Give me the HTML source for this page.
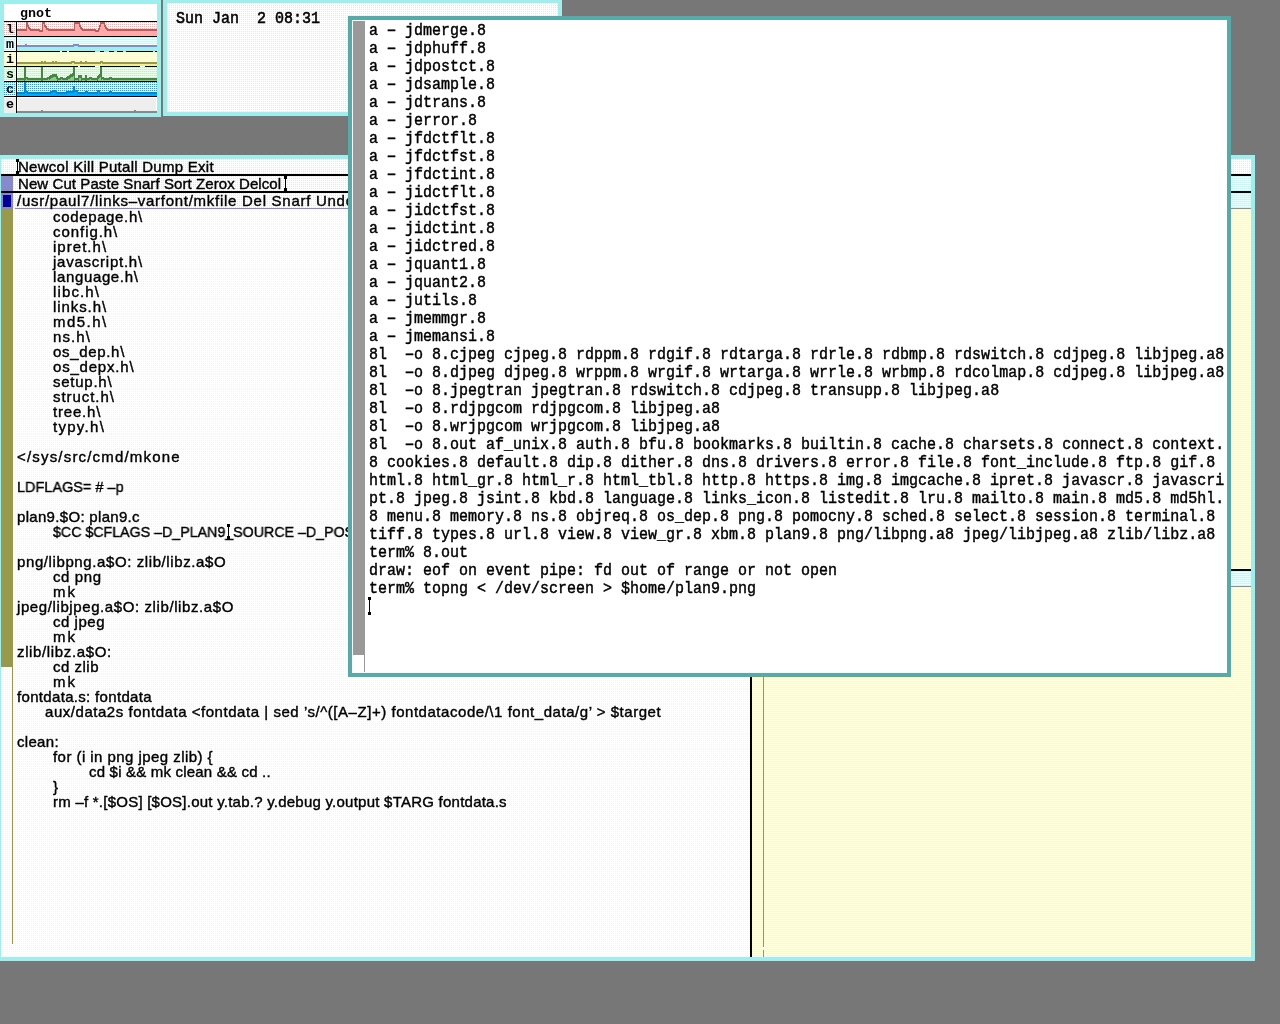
<!DOCTYPE html>
<html><head><meta charset="utf-8"><title>plan9</title>
<style>
html,body{margin:0;padding:0}
body{width:1280px;height:1024px;overflow:hidden;position:relative;background:#777777}
div,svg,span.a{position:absolute}
.c{background-color:#fff;background-image:conic-gradient(from 0deg at 50% 50%,transparent 0 75%,#AAFFFF 75%);background-size:2px 2px}
.y{background-color:#fff;background-image:conic-gradient(from 0deg at 50% 50%,transparent 0 75%,#FFFFAA 75%);background-size:2px 2px}
.r{background-color:#fff;background-image:conic-gradient(from 0deg at 50% 50%,transparent 0 75%,#FFAAAA 75%);background-size:2px 2px}
.g{background-color:#fff;background-image:conic-gradient(from 0deg at 50% 50%,transparent 0 75%,#AAFFAA 75%);background-size:2px 2px}
.b{background-color:#fff;background-image:conic-gradient(from 0deg at 50% 50%,transparent 0 75%,#00AAFF 75%);background-size:2px 2px}
.t,.m,.s{will-change:transform}
.t{font-family:"Liberation Sans",sans-serif;font-size:15px;line-height:15px;height:15px;white-space:pre;color:#000;overflow:visible;-webkit-text-stroke:0.4px #000}
.m{font-family:"Liberation Mono",monospace;font-size:15px;line-height:18.667px;height:18.667px;white-space:pre;color:#000;transform:scaleY(1.125);transform-origin:0 0;-webkit-text-stroke:0.4px #000}
.s{font-family:"Liberation Mono",monospace;font-size:13.333px;line-height:15px;height:15px;white-space:pre;color:#000;font-weight:bold}
.h{position:relative;top:0.9px}
b{font-weight:inherit}
.k{background:#000}
</style></head><body>

<div style="left:0px;top:0px;width:161px;height:117px;background:#9EEEEE;"></div>
<div style="left:4px;top:4px;width:153px;height:109px;background:#fff;"></div>
<div class="s" style="left:20px;top:6px">gnot</div>
<div class="r" style="left:4px;top:22px;width:153px;height:14px;background-position:0px 0px;"></div>
<div class="c" style="left:4px;top:37px;width:153px;height:14px;background-position:0px 0px;"></div>
<div class="y" style="left:4px;top:52px;width:153px;height:14px;background-position:0px 0px;"></div>
<div class="g" style="left:4px;top:67px;width:153px;height:14px;background-position:0px 0px;"></div>
<div class="b" style="left:4px;top:82px;width:153px;height:14px;background-position:0px 0px;"></div>
<div style="left:4px;top:97px;width:153px;height:16px;background:#EEEEEE;"></div>
<div style="left:4px;top:97px;width:153px;height:1px;background:#fff;"></div>
<div style="left:156px;top:97px;width:1px;height:16px;background:#fff;"></div>
<div style="left:17px;top:97px;width:1px;height:16px;background:#fff;"></div>
<svg id="graph" style="left:17px;top:22px" width="140" height="91" viewBox="17 22 140 91" shape-rendering="crispEdges">
<rect x="17" y="31" width="10" height="5" fill="#FFAAAA"/>
<rect x="27" y="27" width="1" height="9" fill="#FFAAAA"/>
<rect x="28" y="29" width="1" height="7" fill="#FFAAAA"/>
<rect x="29" y="30" width="1" height="6" fill="#FFAAAA"/>
<rect x="30" y="31" width="9" height="5" fill="#FFAAAA"/>
<rect x="39" y="32" width="4" height="4" fill="#FFAAAA"/>
<rect x="43" y="24" width="1" height="12" fill="#FFAAAA"/>
<rect x="44" y="27" width="1" height="9" fill="#FFAAAA"/>
<rect x="45" y="28" width="1" height="8" fill="#FFAAAA"/>
<rect x="46" y="30" width="2" height="6" fill="#FFAAAA"/>
<rect x="48" y="31" width="27" height="5" fill="#FFAAAA"/>
<rect x="75" y="24" width="4" height="12" fill="#FFAAAA"/>
<rect x="79" y="27" width="1" height="9" fill="#FFAAAA"/>
<rect x="80" y="29" width="1" height="7" fill="#FFAAAA"/>
<rect x="81" y="30" width="1" height="6" fill="#FFAAAA"/>
<rect x="82" y="31" width="13" height="5" fill="#FFAAAA"/>
<rect x="95" y="32" width="4" height="4" fill="#FFAAAA"/>
<rect x="99" y="30" width="1" height="6" fill="#FFAAAA"/>
<rect x="100" y="27" width="1" height="9" fill="#FFAAAA"/>
<rect x="101" y="24" width="3" height="12" fill="#FFAAAA"/>
<rect x="104" y="27" width="1" height="9" fill="#FFAAAA"/>
<rect x="105" y="29" width="1" height="7" fill="#FFAAAA"/>
<rect x="106" y="30" width="1" height="6" fill="#FFAAAA"/>
<rect x="107" y="31" width="50" height="5" fill="#FFAAAA"/>
<rect x="17" y="29" width="9" height="2" fill="#BB5D5D"/>
<rect x="26" y="22" width="1" height="9" fill="#BB5D5D"/>
<rect x="27" y="22" width="1" height="5" fill="#BB5D5D"/>
<rect x="28" y="25" width="1" height="4" fill="#BB5D5D"/>
<rect x="29" y="27" width="1" height="3" fill="#BB5D5D"/>
<rect x="30" y="28" width="1" height="3" fill="#BB5D5D"/>
<rect x="31" y="29" width="8" height="2" fill="#BB5D5D"/>
<rect x="39" y="29" width="1" height="3" fill="#BB5D5D"/>
<rect x="40" y="30" width="2" height="2" fill="#BB5D5D"/>
<rect x="42" y="22" width="1" height="10" fill="#BB5D5D"/>
<rect x="43" y="22" width="1" height="2" fill="#BB5D5D"/>
<rect x="44" y="22" width="1" height="5" fill="#BB5D5D"/>
<rect x="45" y="25" width="1" height="3" fill="#BB5D5D"/>
<rect x="46" y="26" width="1" height="4" fill="#BB5D5D"/>
<rect x="47" y="28" width="1" height="2" fill="#BB5D5D"/>
<rect x="48" y="28" width="1" height="3" fill="#BB5D5D"/>
<rect x="49" y="29" width="25" height="2" fill="#BB5D5D"/>
<rect x="74" y="22" width="1" height="9" fill="#BB5D5D"/>
<rect x="75" y="22" width="4" height="2" fill="#BB5D5D"/>
<rect x="79" y="22" width="1" height="5" fill="#BB5D5D"/>
<rect x="80" y="25" width="1" height="4" fill="#BB5D5D"/>
<rect x="81" y="27" width="1" height="3" fill="#BB5D5D"/>
<rect x="82" y="28" width="1" height="3" fill="#BB5D5D"/>
<rect x="83" y="29" width="12" height="2" fill="#BB5D5D"/>
<rect x="95" y="29" width="1" height="3" fill="#BB5D5D"/>
<rect x="96" y="30" width="2" height="2" fill="#BB5D5D"/>
<rect x="98" y="28" width="1" height="4" fill="#BB5D5D"/>
<rect x="99" y="25" width="1" height="5" fill="#BB5D5D"/>
<rect x="100" y="22" width="1" height="5" fill="#BB5D5D"/>
<rect x="101" y="22" width="3" height="2" fill="#BB5D5D"/>
<rect x="104" y="22" width="1" height="5" fill="#BB5D5D"/>
<rect x="105" y="25" width="1" height="4" fill="#BB5D5D"/>
<rect x="106" y="27" width="1" height="3" fill="#BB5D5D"/>
<rect x="107" y="28" width="1" height="3" fill="#BB5D5D"/>
<rect x="108" y="29" width="49" height="2" fill="#BB5D5D"/>
<rect x="17" y="47" width="57" height="4" fill="#9EEEEE"/>
<rect x="74" y="46" width="4" height="5" fill="#9EEEEE"/>
<rect x="78" y="47" width="79" height="4" fill="#9EEEEE"/>
<rect x="17" y="45" width="8" height="2" fill="#8888CC"/>
<rect x="25" y="44" width="2" height="3" fill="#8888CC"/>
<rect x="27" y="45" width="46" height="2" fill="#8888CC"/>
<rect x="73" y="44" width="1" height="3" fill="#8888CC"/>
<rect x="74" y="44" width="4" height="2" fill="#8888CC"/>
<rect x="78" y="44" width="1" height="3" fill="#8888CC"/>
<rect x="79" y="45" width="78" height="2" fill="#8888CC"/>
<rect x="17" y="64" width="55" height="2" fill="#EEEE9E"/>
<rect x="72" y="63" width="2" height="3" fill="#EEEE9E"/>
<rect x="74" y="64" width="27" height="2" fill="#EEEE9E"/>
<rect x="101" y="63" width="1" height="3" fill="#EEEE9E"/>
<rect x="102" y="64" width="55" height="2" fill="#EEEE9E"/>
<rect x="17" y="62" width="24" height="2" fill="#99994C"/>
<rect x="41" y="61" width="2" height="3" fill="#99994C"/>
<rect x="43" y="62" width="1" height="2" fill="#99994C"/>
<rect x="44" y="61" width="2" height="3" fill="#99994C"/>
<rect x="46" y="62" width="6" height="2" fill="#99994C"/>
<rect x="52" y="61" width="2" height="3" fill="#99994C"/>
<rect x="54" y="62" width="1" height="2" fill="#99994C"/>
<rect x="55" y="61" width="2" height="3" fill="#99994C"/>
<rect x="57" y="62" width="14" height="2" fill="#99994C"/>
<rect x="71" y="61" width="1" height="3" fill="#99994C"/>
<rect x="72" y="61" width="2" height="2" fill="#99994C"/>
<rect x="74" y="61" width="1" height="3" fill="#99994C"/>
<rect x="75" y="62" width="5" height="2" fill="#99994C"/>
<rect x="80" y="61" width="2" height="3" fill="#99994C"/>
<rect x="82" y="62" width="3" height="2" fill="#99994C"/>
<rect x="85" y="61" width="2" height="3" fill="#99994C"/>
<rect x="87" y="62" width="13" height="2" fill="#99994C"/>
<rect x="100" y="61" width="1" height="3" fill="#99994C"/>
<rect x="101" y="61" width="1" height="2" fill="#99994C"/>
<rect x="102" y="61" width="1" height="3" fill="#99994C"/>
<rect x="103" y="62" width="54" height="2" fill="#99994C"/>
<rect x="17" y="80" width="7" height="1" fill="#88CC88"/>
<rect x="25" y="80" width="1" height="1" fill="#88CC88"/>
<rect x="26" y="79" width="1" height="2" fill="#88CC88"/>
<rect x="27" y="80" width="14" height="1" fill="#88CC88"/>
<rect x="43" y="80" width="5" height="1" fill="#88CC88"/>
<rect x="48" y="79" width="1" height="2" fill="#88CC88"/>
<rect x="49" y="80" width="1" height="1" fill="#88CC88"/>
<rect x="50" y="79" width="1" height="2" fill="#88CC88"/>
<rect x="51" y="78" width="2" height="3" fill="#88CC88"/>
<rect x="53" y="77" width="3" height="4" fill="#88CC88"/>
<rect x="56" y="79" width="1" height="2" fill="#88CC88"/>
<rect x="58" y="80" width="3" height="1" fill="#88CC88"/>
<rect x="61" y="79" width="1" height="2" fill="#88CC88"/>
<rect x="62" y="80" width="6" height="1" fill="#88CC88"/>
<rect x="68" y="79" width="2" height="2" fill="#88CC88"/>
<rect x="70" y="78" width="1" height="3" fill="#88CC88"/>
<rect x="71" y="77" width="2" height="4" fill="#88CC88"/>
<rect x="73" y="76" width="1" height="5" fill="#88CC88"/>
<rect x="75" y="80" width="3" height="1" fill="#88CC88"/>
<rect x="79" y="78" width="2" height="3" fill="#88CC88"/>
<rect x="82" y="80" width="3" height="1" fill="#88CC88"/>
<rect x="87" y="80" width="3" height="1" fill="#88CC88"/>
<rect x="90" y="79" width="1" height="2" fill="#88CC88"/>
<rect x="91" y="80" width="6" height="1" fill="#88CC88"/>
<rect x="98" y="79" width="1" height="2" fill="#88CC88"/>
<rect x="99" y="78" width="1" height="3" fill="#88CC88"/>
<rect x="100" y="77" width="1" height="4" fill="#88CC88"/>
<rect x="101" y="80" width="1" height="1" fill="#88CC88"/>
<rect x="102" y="79" width="1" height="2" fill="#88CC88"/>
<rect x="103" y="80" width="7" height="1" fill="#88CC88"/>
<rect x="110" y="79" width="1" height="2" fill="#88CC88"/>
<rect x="111" y="80" width="46" height="1" fill="#88CC88"/>
<rect x="17" y="78" width="7" height="2" fill="#448844"/>
<rect x="24" y="67" width="1" height="14" fill="#448844"/>
<rect x="25" y="67" width="1" height="13" fill="#448844"/>
<rect x="26" y="77" width="1" height="2" fill="#448844"/>
<rect x="27" y="77" width="1" height="3" fill="#448844"/>
<rect x="28" y="78" width="13" height="2" fill="#448844"/>
<rect x="41" y="67" width="2" height="14" fill="#448844"/>
<rect x="43" y="78" width="4" height="2" fill="#448844"/>
<rect x="47" y="77" width="1" height="3" fill="#448844"/>
<rect x="48" y="77" width="1" height="2" fill="#448844"/>
<rect x="49" y="76" width="1" height="4" fill="#448844"/>
<rect x="50" y="75" width="1" height="4" fill="#448844"/>
<rect x="51" y="75" width="1" height="3" fill="#448844"/>
<rect x="52" y="74" width="1" height="4" fill="#448844"/>
<rect x="53" y="74" width="3" height="3" fill="#448844"/>
<rect x="56" y="74" width="1" height="5" fill="#448844"/>
<rect x="57" y="76" width="1" height="5" fill="#448844"/>
<rect x="58" y="78" width="2" height="2" fill="#448844"/>
<rect x="60" y="77" width="1" height="3" fill="#448844"/>
<rect x="61" y="77" width="1" height="2" fill="#448844"/>
<rect x="62" y="77" width="1" height="3" fill="#448844"/>
<rect x="63" y="78" width="3" height="2" fill="#448844"/>
<rect x="66" y="77" width="1" height="3" fill="#448844"/>
<rect x="67" y="76" width="1" height="4" fill="#448844"/>
<rect x="68" y="76" width="1" height="3" fill="#448844"/>
<rect x="69" y="75" width="1" height="4" fill="#448844"/>
<rect x="70" y="74" width="1" height="4" fill="#448844"/>
<rect x="71" y="74" width="1" height="3" fill="#448844"/>
<rect x="72" y="73" width="1" height="4" fill="#448844"/>
<rect x="73" y="67" width="1" height="9" fill="#448844"/>
<rect x="74" y="67" width="1" height="14" fill="#448844"/>
<rect x="75" y="78" width="3" height="2" fill="#448844"/>
<rect x="78" y="75" width="1" height="6" fill="#448844"/>
<rect x="79" y="75" width="2" height="3" fill="#448844"/>
<rect x="81" y="75" width="1" height="6" fill="#448844"/>
<rect x="82" y="78" width="3" height="2" fill="#448844"/>
<rect x="85" y="75" width="2" height="6" fill="#448844"/>
<rect x="87" y="78" width="2" height="2" fill="#448844"/>
<rect x="89" y="77" width="1" height="3" fill="#448844"/>
<rect x="90" y="77" width="1" height="2" fill="#448844"/>
<rect x="91" y="77" width="1" height="3" fill="#448844"/>
<rect x="92" y="78" width="5" height="2" fill="#448844"/>
<rect x="97" y="76" width="1" height="5" fill="#448844"/>
<rect x="98" y="75" width="1" height="4" fill="#448844"/>
<rect x="99" y="74" width="1" height="4" fill="#448844"/>
<rect x="100" y="67" width="1" height="10" fill="#448844"/>
<rect x="101" y="67" width="1" height="13" fill="#448844"/>
<rect x="102" y="77" width="1" height="2" fill="#448844"/>
<rect x="103" y="77" width="1" height="3" fill="#448844"/>
<rect x="104" y="78" width="5" height="2" fill="#448844"/>
<rect x="109" y="77" width="1" height="3" fill="#448844"/>
<rect x="110" y="77" width="1" height="2" fill="#448844"/>
<rect x="111" y="77" width="1" height="3" fill="#448844"/>
<rect x="112" y="78" width="45" height="2" fill="#448844"/>
<rect x="17" y="94" width="8" height="2" fill="#00AAFF"/>
<rect x="25" y="93" width="2" height="3" fill="#00AAFF"/>
<rect x="27" y="94" width="24" height="2" fill="#00AAFF"/>
<rect x="51" y="93" width="2" height="3" fill="#00AAFF"/>
<rect x="53" y="92" width="2" height="4" fill="#00AAFF"/>
<rect x="55" y="93" width="1" height="3" fill="#00AAFF"/>
<rect x="56" y="94" width="11" height="2" fill="#00AAFF"/>
<rect x="67" y="93" width="7" height="3" fill="#00AAFF"/>
<rect x="74" y="92" width="3" height="4" fill="#00AAFF"/>
<rect x="77" y="94" width="9" height="2" fill="#00AAFF"/>
<rect x="86" y="93" width="1" height="3" fill="#00AAFF"/>
<rect x="87" y="94" width="11" height="2" fill="#00AAFF"/>
<rect x="98" y="92" width="1" height="4" fill="#00AAFF"/>
<rect x="99" y="94" width="11" height="2" fill="#00AAFF"/>
<rect x="110" y="93" width="1" height="3" fill="#00AAFF"/>
<rect x="111" y="94" width="46" height="2" fill="#00AAFF"/>
<rect x="17" y="92" width="7" height="2" fill="#0088CC"/>
<rect x="24" y="82" width="1" height="12" fill="#0088CC"/>
<rect x="25" y="82" width="1" height="11" fill="#0088CC"/>
<rect x="26" y="91" width="1" height="2" fill="#0088CC"/>
<rect x="27" y="91" width="1" height="3" fill="#0088CC"/>
<rect x="28" y="92" width="22" height="2" fill="#0088CC"/>
<rect x="50" y="91" width="1" height="3" fill="#0088CC"/>
<rect x="51" y="91" width="1" height="2" fill="#0088CC"/>
<rect x="52" y="90" width="1" height="3" fill="#0088CC"/>
<rect x="53" y="90" width="2" height="2" fill="#0088CC"/>
<rect x="55" y="90" width="1" height="3" fill="#0088CC"/>
<rect x="56" y="91" width="1" height="3" fill="#0088CC"/>
<rect x="57" y="92" width="9" height="2" fill="#0088CC"/>
<rect x="66" y="91" width="1" height="3" fill="#0088CC"/>
<rect x="67" y="91" width="6" height="2" fill="#0088CC"/>
<rect x="73" y="86" width="1" height="7" fill="#0088CC"/>
<rect x="74" y="86" width="1" height="6" fill="#0088CC"/>
<rect x="75" y="90" width="2" height="2" fill="#0088CC"/>
<rect x="77" y="90" width="1" height="4" fill="#0088CC"/>
<rect x="78" y="92" width="7" height="2" fill="#0088CC"/>
<rect x="85" y="91" width="1" height="3" fill="#0088CC"/>
<rect x="86" y="91" width="1" height="2" fill="#0088CC"/>
<rect x="87" y="91" width="1" height="3" fill="#0088CC"/>
<rect x="88" y="92" width="9" height="2" fill="#0088CC"/>
<rect x="97" y="90" width="1" height="4" fill="#0088CC"/>
<rect x="98" y="90" width="1" height="2" fill="#0088CC"/>
<rect x="99" y="90" width="1" height="4" fill="#0088CC"/>
<rect x="100" y="92" width="9" height="2" fill="#0088CC"/>
<rect x="109" y="91" width="1" height="3" fill="#0088CC"/>
<rect x="110" y="91" width="1" height="2" fill="#0088CC"/>
<rect x="111" y="91" width="1" height="3" fill="#0088CC"/>
<rect x="112" y="92" width="45" height="2" fill="#0088CC"/>
<rect x="17" y="111" width="24" height="2" fill="#888888"/>
<rect x="41" y="110" width="2" height="3" fill="#888888"/>
<rect x="43" y="111" width="91" height="2" fill="#888888"/>
<rect x="134" y="110" width="2" height="3" fill="#888888"/>
<rect x="136" y="111" width="21" height="2" fill="#888888"/>
</svg>
<div style="left:4px;top:21px;width:153px;height:1px;background:#000;"></div>
<div style="left:4px;top:36px;width:153px;height:1px;background:#000;"></div>
<div style="left:4px;top:51px;width:153px;height:1px;background:#000;"></div>
<div style="left:4px;top:66px;width:153px;height:1px;background:#000;"></div>
<div style="left:4px;top:81px;width:153px;height:1px;background:#000;"></div>
<div style="left:4px;top:96px;width:153px;height:1px;background:#000;"></div>
<div style="left:16px;top:21px;width:1px;height:92px;background:#000;"></div>
<div style="left:60px;top:51px;width:2px;height:1px;background:#fff;"></div>
<div style="left:67px;top:51px;width:2px;height:1px;background:#fff;"></div>
<div style="left:95px;top:51px;width:5px;height:1px;background:#9EEEEE;"></div>
<div style="left:104px;top:51px;width:5px;height:1px;background:#9EEEEE;"></div>
<div style="left:114px;top:51px;width:3px;height:1px;background:#9EEEEE;"></div>
<div style="left:123px;top:51px;width:3px;height:1px;background:#9EEEEE;"></div>
<div style="left:153px;top:51px;width:2px;height:1px;background:#9EEEEE;"></div>
<div style="left:78px;top:66px;width:2px;height:1px;background:#fff;"></div>
<div style="left:95px;top:66px;width:5px;height:1px;background:#fff;"></div>
<div style="left:140px;top:66px;width:5px;height:1px;background:#fff;"></div>
<div class="s" style="left:6px;top:22px">l</div>
<div class="s" style="left:6px;top:37px">m</div>
<div class="s" style="left:6px;top:52px">i</div>
<div class="s" style="left:6px;top:67px">s</div>
<div class="s" style="left:6px;top:82px">c</div>
<div class="s" style="left:6px;top:97px">e</div>
<div style="left:163px;top:0px;width:399px;height:116px;background:#9EEEEE;"></div>
<div class="c" style="left:167px;top:3px;width:391px;height:109px;background-position:0px 0px;"></div>
<div class="m" style="left:176px;top:9px;-webkit-text-stroke:0.5px #000">Sun Jan  2 08:31</div>
<div style="left:-3px;top:155px;width:1258px;height:806px;background:#9EEEEE;"></div>
<div class="c" style="left:1px;top:159px;width:1250px;height:15px;background-position:0px 0px;"></div>
<div style="left:1px;top:174px;width:1250px;height:2px;background:#000;"></div>
<div class="c" style="left:1px;top:176px;width:749px;height:15px;background-position:0px 0px;"></div>
<div class="c" style="left:752px;top:176px;width:499px;height:15px;background-position:0px 0px;"></div>
<div style="left:1px;top:176px;width:12px;height:15px;background:#8888CC;"></div>
<div style="left:750px;top:174px;width:2px;height:783px;background:#000;"></div>
<div style="left:752px;top:176px;width:12px;height:15px;background:#8888CC;"></div>
<div style="left:1px;top:191px;width:1250px;height:2px;background:#000;"></div>
<div class="c" style="left:1px;top:193px;width:749px;height:16px;background-position:0px 0px;"></div>
<div class="c" style="left:752px;top:193px;width:499px;height:16px;background-position:0px 0px;"></div>
<div style="left:1px;top:193px;width:12px;height:16px;background:#8888CC;"></div>
<div style="left:3px;top:195px;width:8px;height:12px;background:#000099;"></div>
<div style="left:752px;top:193px;width:12px;height:16px;background:#8888CC;"></div>
<div style="left:15px;top:208px;width:735px;height:1px;background:#8888CC;"></div>
<div style="left:766px;top:208px;width:485px;height:1px;background:#8888CC;"></div>
<div class="y" style="left:1px;top:209px;width:749px;height:748px;background-position:0px 0px;"></div>
<div style="left:1px;top:209px;width:12px;height:458px;background:#99994C;"></div>
<div style="left:12px;top:667px;width:1px;height:277px;background:#99994C;"></div>
<div class="y" style="left:752px;top:209px;width:499px;height:360px;background-position:0px 0px;"></div>
<div class="y" style="left:752px;top:587px;width:499px;height:370px;background-position:0px 0px;"></div>
<div style="left:763px;top:209px;width:1px;height:738px;background:#99994C;"></div>
<div style="left:763px;top:950px;width:1px;height:7px;background:#99994C;"></div>
<div style="left:752px;top:569px;width:499px;height:2px;background:#000;"></div>
<div class="c" style="left:752px;top:571px;width:499px;height:16px;background-position:0px 0px;"></div>
<div style="left:752px;top:571px;width:12px;height:16px;background:#8888CC;"></div>
<div style="left:766px;top:586px;width:485px;height:1px;background:#8888CC;"></div>
<div class="t" style="left:18px;top:159px;letter-spacing:0.2664px;">Newcol Kill Putall Dump Exit</div>
<div class="t" style="left:18px;top:176px;letter-spacing:0.0831px;">New Cut Paste Snarf Sort Zerox Delcol</div>
<div class="t" style="left:17px;top:193px;letter-spacing:0.7273px;">/usr/paul7/links–varfont/mkfile Del Snarf Undo Put | Look </div>
<div style="left:17px;top:159px;width:1px;height:15px;background:#000;"></div>
<div style="left:16px;top:159px;width:3px;height:3px;background:#000;"></div>
<div style="left:16px;top:171px;width:3px;height:3px;background:#000;"></div>
<div style="left:285px;top:176px;width:1px;height:15px;background:#000;"></div>
<div style="left:284px;top:176px;width:3px;height:3px;background:#000;"></div>
<div style="left:284px;top:188px;width:3px;height:3px;background:#000;"></div>
<div class="y" style="left:17px;top:224px;width:733px;height:15px;background-position:0px 0px;"></div>
<div class="y" style="left:17px;top:254px;width:733px;height:15px;background-position:0px 0px;"></div>
<div class="y" style="left:17px;top:284px;width:733px;height:15px;background-position:0px 0px;"></div>
<div class="y" style="left:17px;top:314px;width:733px;height:15px;background-position:0px 0px;"></div>
<div class="y" style="left:17px;top:344px;width:733px;height:15px;background-position:0px 0px;"></div>
<div class="y" style="left:17px;top:374px;width:733px;height:15px;background-position:0px 0px;"></div>
<div class="y" style="left:17px;top:404px;width:733px;height:15px;background-position:0px 0px;"></div>
<div class="y" style="left:17px;top:434px;width:733px;height:15px;background-position:0px 0px;"></div>
<div class="y" style="left:17px;top:464px;width:733px;height:15px;background-position:0px 0px;"></div>
<div class="y" style="left:17px;top:494px;width:733px;height:15px;background-position:0px 0px;"></div>
<div class="y" style="left:17px;top:524px;width:733px;height:15px;background-position:0px 0px;"></div>
<div class="y" style="left:17px;top:554px;width:733px;height:15px;background-position:0px 0px;"></div>
<div class="y" style="left:17px;top:584px;width:733px;height:15px;background-position:0px 0px;"></div>
<div class="y" style="left:17px;top:614px;width:733px;height:15px;background-position:0px 0px;"></div>
<div class="y" style="left:17px;top:644px;width:733px;height:15px;background-position:0px 0px;"></div>
<div class="y" style="left:17px;top:674px;width:733px;height:15px;background-position:0px 0px;"></div>
<div class="y" style="left:17px;top:704px;width:733px;height:15px;background-position:0px 0px;"></div>
<div class="y" style="left:17px;top:734px;width:733px;height:15px;background-position:0px 0px;"></div>
<div class="y" style="left:17px;top:764px;width:733px;height:15px;background-position:0px 0px;"></div>
<div class="t" style="left:53px;top:209px;letter-spacing:0.6522px;">codepage.h\</div>
<div class="t" style="left:53px;top:224px;letter-spacing:0.9477px;">config.h\</div>
<div class="t" style="left:53px;top:239px;letter-spacing:1.0344px;">ipret.h\</div>
<div class="t" style="left:53px;top:254px;letter-spacing:0.7544px;">javascript.h\</div>
<div class="t" style="left:53px;top:269px;letter-spacing:0.6394px;">language.h\</div>
<div class="t" style="left:53px;top:284px;letter-spacing:1.1354px;">libc.h\</div>
<div class="t" style="left:53px;top:299px;letter-spacing:0.9161px;">links.h\</div>
<div class="t" style="left:53px;top:314px;letter-spacing:1.4481px;">md5.h\</div>
<div class="t" style="left:53px;top:329px;letter-spacing:1.1172px;">ns.h\</div>
<div class="t" style="left:53px;top:344px;letter-spacing:0.6762px;">os_dep.h\</div>
<div class="t" style="left:53px;top:359px;letter-spacing:0.8010px;">os_depx.h\</div>
<div class="t" style="left:53px;top:374px;letter-spacing:0.7464px;">setup.h\</div>
<div class="t" style="left:53px;top:389px;letter-spacing:0.9426px;">struct.h\</div>
<div class="t" style="left:53px;top:404px;letter-spacing:0.8115px;">tree.h\</div>
<div class="t" style="left:53px;top:419px;letter-spacing:1.2870px;">typy.h\</div>
<div class="t" style="left:17px;top:449px;letter-spacing:1.1835px;">&lt;/sys/src/cmd/mkone</div>
<div class="t" style="left:17px;top:479px;transform:scaleX(0.9648);transform-origin:0 0;">LDFLAGS= # –p</div>
<div class="t" style="left:17px;top:509px;letter-spacing:0.3129px;">plan9.$O: plan9.c</div>
<div class="t" style="left:53px;top:524px;transform:scaleX(0.948);transform-origin:0 0;">$CC $CFLAGS –D_PLAN9_SOURCE –D_POSIX_SOURCE</div>
<div class="t" style="left:17px;top:554px;letter-spacing:0.6001px;">png/libpng.a$O: zlib/libz.a$O</div>
<div class="t" style="left:53px;top:569px;letter-spacing:0.5906px;">cd png</div>
<div class="t" style="left:53px;top:584px;letter-spacing:2.1000px;">mk</div>
<div class="t" style="left:17px;top:599px;letter-spacing:0.5982px;">jpeg/libjpeg.a$O: zlib/libz.a$O</div>
<div class="t" style="left:53px;top:614px;letter-spacing:0.5375px;">cd jpeg</div>
<div class="t" style="left:53px;top:629px;letter-spacing:2.1000px;">mk</div>
<div class="t" style="left:17px;top:644px;letter-spacing:0.6327px;">zlib/libz.a$O:</div>
<div class="t" style="left:53px;top:659px;letter-spacing:0.4948px;">cd zlib</div>
<div class="t" style="left:53px;top:674px;letter-spacing:2.1000px;">mk</div>
<div class="t" style="left:17px;top:689px;letter-spacing:0.3243px;">fontdata.s: fontdata</div>
<div class="t" style="left:45px;top:704px;letter-spacing:0.5390px;">aux/data2s fontdata &lt;fontdata | sed ’s/^([A–Z]+) fontdatacode/\1 font_data/g’ &gt; $target</div>
<div class="t" style="left:17px;top:734px;letter-spacing:0.3138px;">clean:</div>
<div class="t" style="left:53px;top:749px;letter-spacing:0.4471px;">for (i in png jpeg zlib) {</div>
<div class="t" style="left:89px;top:764px;letter-spacing:0.1940px;">cd $i &amp;&amp; mk clean &amp;&amp; cd ..</div>
<div class="t" style="left:53px;top:779px;">}</div>
<div class="t" style="left:53px;top:794px;letter-spacing:0.2394px;">rm –f *.[$OS] [$OS].out y.tab.? y.debug y.output $TARG fontdata.s</div>
<div style="left:228px;top:524px;width:1px;height:15px;background:#000;"></div>
<div style="left:227px;top:524px;width:3px;height:3px;background:#000;"></div>
<div style="left:227px;top:536px;width:3px;height:3px;background:#000;"></div>
<div style="left:348px;top:16px;width:883px;height:661px;background:#55AAAA;"></div>
<div style="left:352px;top:20px;width:875px;height:653px;background:#fff;"></div>
<div style="left:353px;top:21px;width:12px;height:634px;background:#999999;"></div>
<div style="left:364px;top:655px;width:1px;height:17px;background:#999999;"></div>
<div class="m" style="left:369px;top:21px">a <span class="h">−</span> jdmerge.8</div>
<div class="m" style="left:369px;top:39px">a <span class="h">−</span> jdphuff.8</div>
<div class="m" style="left:369px;top:57px">a <span class="h">−</span> jdpostct.8</div>
<div class="m" style="left:369px;top:75px">a <span class="h">−</span> jdsample.8</div>
<div class="m" style="left:369px;top:93px">a <span class="h">−</span> jdtrans.8</div>
<div class="m" style="left:369px;top:111px">a <span class="h">−</span> jerror.8</div>
<div class="m" style="left:369px;top:129px">a <span class="h">−</span> jfdctflt.8</div>
<div class="m" style="left:369px;top:147px">a <span class="h">−</span> jfdctfst.8</div>
<div class="m" style="left:369px;top:165px">a <span class="h">−</span> jfdctint.8</div>
<div class="m" style="left:369px;top:183px">a <span class="h">−</span> jidctflt.8</div>
<div class="m" style="left:369px;top:201px">a <span class="h">−</span> jidctfst.8</div>
<div class="m" style="left:369px;top:219px">a <span class="h">−</span> jidctint.8</div>
<div class="m" style="left:369px;top:237px">a <span class="h">−</span> jidctred.8</div>
<div class="m" style="left:369px;top:255px">a <span class="h">−</span> jquant1.8</div>
<div class="m" style="left:369px;top:273px">a <span class="h">−</span> jquant2.8</div>
<div class="m" style="left:369px;top:291px">a <span class="h">−</span> jutils.8</div>
<div class="m" style="left:369px;top:309px">a <span class="h">−</span> jmemmgr.8</div>
<div class="m" style="left:369px;top:327px">a <span class="h">−</span> jmemansi.8</div>
<div class="m" style="left:369px;top:345px">8l  <span class="h">−</span>o 8.cjpeg cjpeg.8 rdppm.8 rdgif.8 rdtarga.8 rdrle.8 rdbmp.8 rdswitch.8 cdjpeg.8 libjpeg.a8</div>
<div class="m" style="left:369px;top:363px">8l  <span class="h">−</span>o 8.djpeg djpeg.8 wrppm.8 wrgif.8 wrtarga.8 wrrle.8 wrbmp.8 rdcolmap.8 cdjpeg.8 libjpeg.a8</div>
<div class="m" style="left:369px;top:381px">8l  <span class="h">−</span>o 8.jpegtran jpegtran.8 rdswitch.8 cdjpeg.8 transupp.8 libjpeg.a8</div>
<div class="m" style="left:369px;top:399px">8l  <span class="h">−</span>o 8.rdjpgcom rdjpgcom.8 libjpeg.a8</div>
<div class="m" style="left:369px;top:417px">8l  <span class="h">−</span>o 8.wrjpgcom wrjpgcom.8 libjpeg.a8</div>
<div class="m" style="left:369px;top:435px">8l  <span class="h">−</span>o 8.out af_unix.8 auth.8 bfu.8 bookmarks.8 builtin.8 cache.8 charsets.8 connect.8 context.</div>
<div class="m" style="left:369px;top:453px">8 cookies.8 default.8 dip.8 dither.8 dns.8 drivers.8 error.8 file.8 font_include.8 ftp.8 gif.8 </div>
<div class="m" style="left:369px;top:471px">html.8 html_gr.8 html_r.8 html_tbl.8 ht<b></b>tp.8 ht<b></b>tps.8 img.8 imgcache.8 ipret.8 javascr.8 javascri</div>
<div class="m" style="left:369px;top:489px">pt.8 jpeg.8 jsint.8 kbd.8 language.8 links_icon.8 listedit.8 lru.8 mailto.8 main.8 md5.8 md5hl.</div>
<div class="m" style="left:369px;top:507px">8 menu.8 memory.8 ns.8 objreq.8 os_dep.8 png.8 pomocny.8 sched.8 select.8 session.8 terminal.8 </div>
<div class="m" style="left:369px;top:525px">tiff.8 types.8 url.8 view.8 view_gr.8 xbm.8 plan9.8 png/libpng.a8 jpeg/libjpeg.a8 zlib/libz.a8</div>
<div class="m" style="left:369px;top:543px">term% 8.out</div>
<div class="m" style="left:369px;top:561px">draw: eof on event pipe: fd out of range or not open</div>
<div class="m" style="left:369px;top:579px">term% topng &lt; /dev/screen &gt; $home/plan9.png</div>
<div style="left:369px;top:597px;width:1px;height:18px;background:#000;"></div>
<div style="left:368px;top:597px;width:3px;height:3px;background:#000;"></div>
<div style="left:368px;top:612px;width:3px;height:3px;background:#000;"></div>
</body></html>
